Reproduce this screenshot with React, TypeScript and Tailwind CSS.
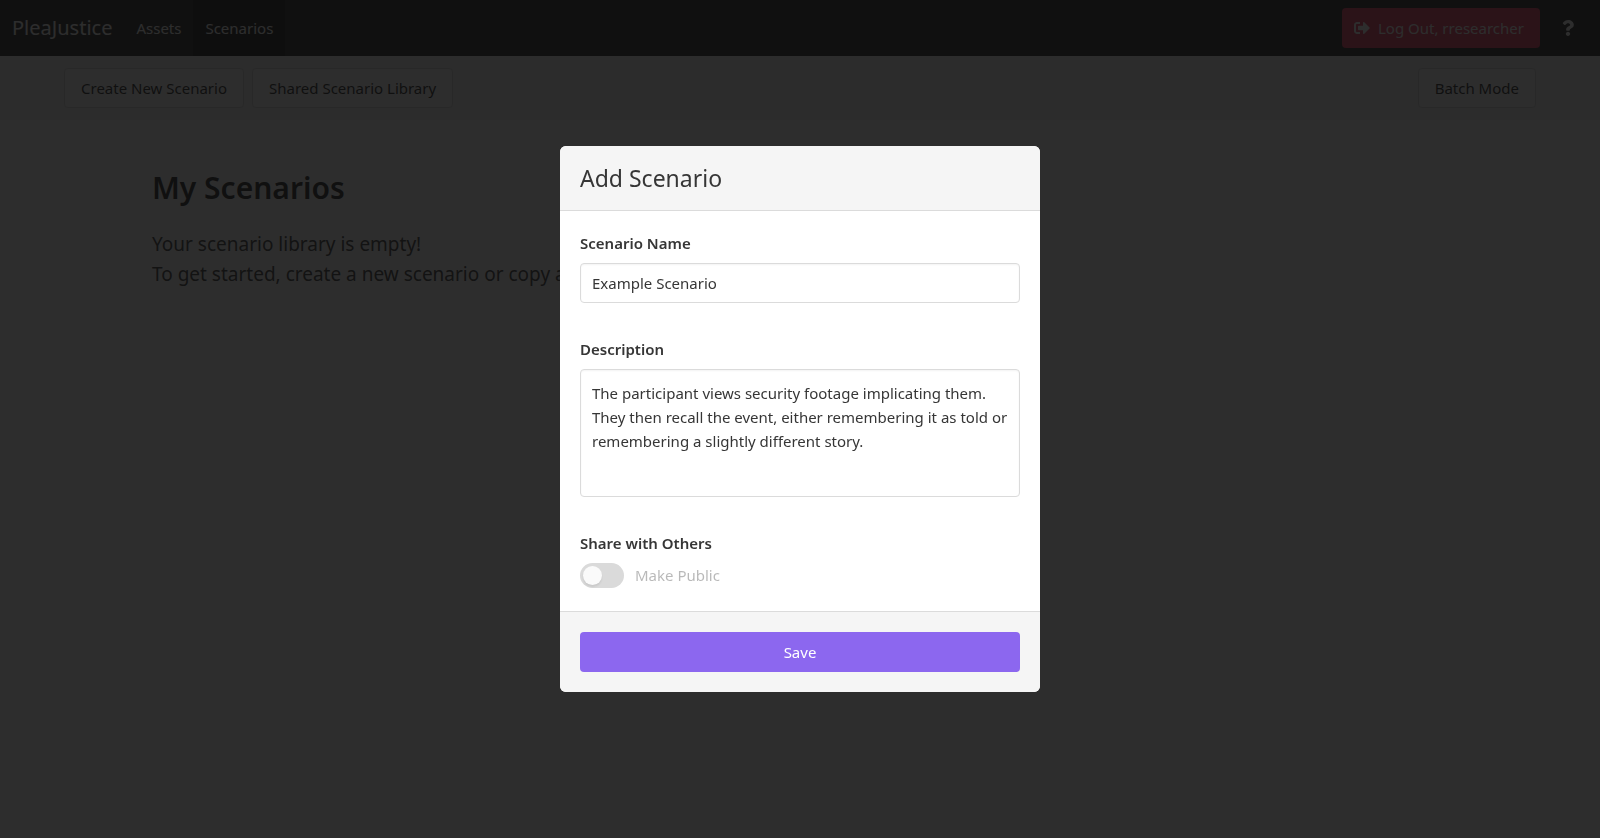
import { useState } from "react";
import { FaQuestion, FaSignOutAlt } from "react-icons/fa";

const toolbarButton =
  "h-10 rounded border border-[#dbdbdb] bg-white px-4 text-[#363636]";
const fieldLabel = "mb-2 block leading-6 font-semibold text-[#363636]";
const fieldBox =
  "block w-full rounded border border-[#dbdbdb] bg-white px-[11px] text-[#363636] shadow-[inset_0_1px_2px_rgba(10,10,10,0.05)] outline-none";

function Navbar() {
  return (
    <nav className="flex h-14 items-stretch justify-between bg-[#363636] text-white">
      <div className="flex">
        <a href="#home" className="flex items-center px-3 text-xl">
          PleaJustice
        </a>
        <a href="#assets" className="flex items-center px-3">
          Assets
        </a>
        <a href="#scenarios" className="flex items-center bg-[#292929] px-3">
          Scenarios
        </a>
      </div>
      <div className="flex items-center gap-4 pr-5">
        <button
          type="button"
          className="flex h-10 items-center gap-2 rounded bg-[#f14668] pr-4 pl-3"
        >
          <FaSignOutAlt className="size-4" />
          Log Out, rresearcher
        </button>
        <button type="button" aria-label="Help" className="p-1">
          <FaQuestion className="size-4" />
        </button>
      </div>
    </nav>
  );
}

function Toolbar() {
  return (
    <div className="flex h-16 items-center justify-between bg-[#f5f5f5] px-16">
      <div className="flex gap-2">
        <button type="button" className={toolbarButton}>
          Create New Scenario
        </button>
        <button type="button" className={toolbarButton}>
          Shared Scenario Library
        </button>
      </div>
      <button type="button" className={toolbarButton}>
        Batch Mode
      </button>
    </div>
  );
}

function AddScenarioModal() {
  const [name, setName] = useState("Example Scenario");
  const [description, setDescription] = useState(
    "The participant views security footage implicating them. They then recall the event, either remembering it as told or remembering a slightly different story.",
  );
  const [shared, setShared] = useState(false);

  return (
    <div className="fixed inset-0 flex items-center justify-center bg-[rgba(10,10,10,0.86)]">
      <form
        role="dialog"
        aria-labelledby="modal-title"
        onSubmit={(e) => e.preventDefault()}
        className="w-full max-w-[480px] overflow-hidden rounded-md bg-white"
      >
        <header className="border-b border-[#dbdbdb] bg-[#f5f5f5] p-5">
          <h2 id="modal-title" className="text-[23px] leading-6 text-[#363636]">
            Add Scenario
          </h2>
        </header>

        <div className="flex flex-col gap-[34px] px-5 pt-5 pb-[23px]">
          <div>
            <label htmlFor="name" className={fieldLabel}>
              Scenario Name
            </label>
            <input
              id="name"
              value={name}
              onChange={(e) => setName(e.target.value)}
              className={`${fieldBox} h-10`}
            />
          </div>
          <div>
            <label htmlFor="description" className={fieldLabel}>
              Description
            </label>
            <textarea
              id="description"
              rows={4}
              value={description}
              onChange={(e) => setDescription(e.target.value)}
              className={`${fieldBox} h-32 resize-none py-[11px] leading-6`}
            />
          </div>
          <fieldset>
            <legend className={fieldLabel}>Share with Others</legend>
            <label className="flex items-center gap-[11px] text-[#363636]/35">
              <input
                type="checkbox"
                checked={shared}
                onChange={(e) => setShared(e.target.checked)}
                className="peer sr-only"
              />
              <span className="flex h-[25px] w-11 items-center rounded-full bg-[#dadada] px-[3px] peer-checked:justify-end peer-checked:bg-[#8c67ef]">
                <span className="size-[19px] rounded-full bg-[#fafafa] shadow-[0_2px_2px_rgba(0,0,0,0.08)]" />
              </span>
              Make Public
            </label>
          </fieldset>
        </div>

        <footer className="border-t border-[#dbdbdb] bg-[#f5f5f5] p-5">
          <button
            type="submit"
            className="h-10 w-full rounded bg-[#8c67ef] text-white"
          >
            Save
          </button>
        </footer>
      </form>
    </div>
  );
}

export default function App() {
  return (
    <div className="flex min-h-screen flex-col bg-white font-['Noto_Sans','Open_Sans',sans-serif] text-[15px]">
      <Navbar />
      <Toolbar />
      <main className="grow px-[152px] pt-12">
        <h1 className="mb-[21px] text-[30px] leading-10 font-semibold text-[#363636]">
          My Scenarios
        </h1>
        <p className="text-[19px] leading-[30px] text-[#4a4a4a]">
          Your scenario library is empty!
          <br />
          To get started, create a new scenario or copy a
        </p>
      </main>
      <AddScenarioModal />
    </div>
  );
}
